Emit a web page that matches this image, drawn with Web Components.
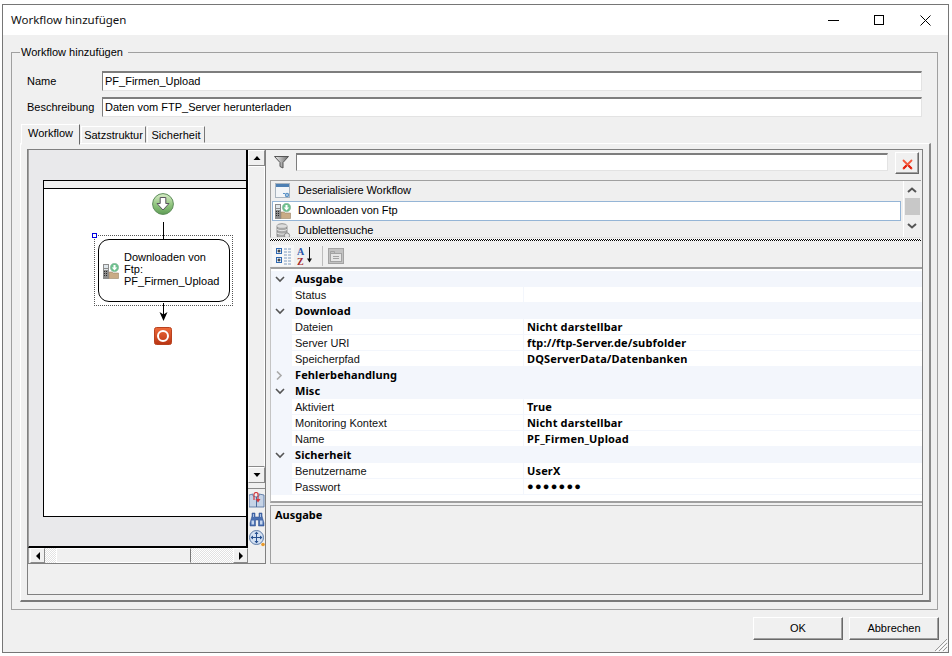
<!DOCTYPE html>
<html lang="de">
<head>
<meta charset="utf-8">
<title>Workflow hinzufügen</title>
<style>
  html, body { margin: 0; padding: 0; background: #fff; }
  body { font: 11px "Liberation Sans", Arial, sans-serif; color: #000; }
</style>
</head>
<body>
<wf-dialog heading="Workflow hinzufügen">
  <wf-group legend="Workflow hinzufügen">
    <wf-field label="Name" value="PF_Firmen_Upload"></wf-field>
    <wf-field label="Beschreibung" value="Daten vom FTP_Server herunterladen"></wf-field>
    <wf-tabs>
      <wf-designer slot="left">
        <wf-node>Downloaden von Ftp: PF_Firmen_Upload</wf-node>
      </wf-designer>
      <wf-filter slot="right"></wf-filter>
      <wf-list slot="right">
        <wf-list-item icon="window">Deserialisiere Workflow</wf-list-item>
        <wf-list-item icon="download" selected>Downloaden von Ftp</wf-list-item>
        <wf-list-item icon="database">Dublettensuche</wf-list-item>
      </wf-list>
      <wf-splitter slot="right"></wf-splitter>
      <wf-grid-toolbar slot="right"></wf-grid-toolbar>
      <wf-propgrid slot="right">
        <wf-prop-group label="Ausgabe">
          <wf-prop name="Status"></wf-prop>
        </wf-prop-group>
        <wf-prop-group label="Download">
          <wf-prop name="Dateien" value="Nicht darstellbar"></wf-prop>
          <wf-prop name="Server URI" value="ftp://ftp-Server.de/subfolder"></wf-prop>
          <wf-prop name="Speicherpfad" value="DQServerData/Datenbanken"></wf-prop>
        </wf-prop-group>
        <wf-prop-group label="Fehlerbehandlung" collapsed></wf-prop-group>
        <wf-prop-group label="Misc">
          <wf-prop name="Aktiviert" value="True"></wf-prop>
          <wf-prop name="Monitoring Kontext" value="Nicht darstellbar"></wf-prop>
          <wf-prop name="Name" value="PF_Firmen_Upload"></wf-prop>
        </wf-prop-group>
        <wf-prop-group label="Sicherheit">
          <wf-prop name="Benutzername" value="UserX"></wf-prop>
          <wf-prop name="Passwort" value="●●●●●●●" secret></wf-prop>
        </wf-prop-group>
      </wf-propgrid>
      <wf-description slot="right">Ausgabe</wf-description>
    </wf-tabs>
  </wf-group>
</wf-dialog>

<script>
const BOLD = '700 11px "Noto Sans", "Liberation Sans", sans-serif';

const ICONS = {
  start: `<svg width="22" height="22" viewBox="0 0 22 22"><defs><linearGradient id="g" x1="0" y1="0" x2="0" y2="1"><stop offset="0" stop-color="#d9edc9"/><stop offset=".55" stop-color="#8fc47d"/><stop offset="1" stop-color="#5f9d56"/></linearGradient></defs><circle cx="11" cy="11" r="10.4" fill="url(#g)" stroke="#5c8c58" stroke-width="1"/><path d="M8.2 4.500h5.600v6h3.200L11 17 5 10.500h3.200z" fill="#fff" stroke="#5b5560" stroke-width="1"/></svg>`,
  stop: `<svg width="18" height="18" viewBox="0 0 18 18"><defs><linearGradient id="g" x1="0" y1="0" x2="0" y2="1"><stop offset="0" stop-color="#ee6a3a"/><stop offset="1" stop-color="#b93413"/></linearGradient></defs><rect x=".5" y=".5" width="17" height="17" rx="2" fill="url(#g)" stroke="#b8421f"/><circle cx="9" cy="9" r="5" fill="none" stroke="#fff" stroke-width="2"/></svg>`,
  download: `<svg width="16" height="16" viewBox="0 0 16 16"><rect x="0" y="1" width="6" height="15" fill="#8c8c8c"/><rect x="1" y="2" width="4" height="3" fill="#dfe6ea"/><rect x="1" y="6" width="4" height="1" fill="#dfe6ea"/><rect x="1" y="8" width="1" height="1" fill="#2b2b2b"/><rect x="3" y="8" width="1" height="1" fill="#2b2b2b"/><rect x="1" y="10" width="1" height="1" fill="#2b2b2b"/><rect x="3" y="10" width="1" height="1" fill="#2b2b2b"/><rect x="1" y="12" width="1" height="1" fill="#2b2b2b"/><rect x="3" y="12" width="1" height="1" fill="#2b2b2b"/><path d="M6 9h3l1 1h5.500v5.500H6z" fill="#c9ab86" stroke="#9a8468" stroke-width=".6"/><circle cx="11.500" cy="4.500" r="4.200" fill="#6cc08d" stroke="#8fb8a0" stroke-width=".6"/><path d="M10.500 2h2v2.500h1.800L11.500 7.500 8.700 4.500h1.800z" fill="#fff"/></svg>`,
  window: `<svg width="16" height="16" viewBox="0 0 16 16"><rect x=".5" y=".5" width="14" height="14" fill="#f2f5f8" stroke="#a9b4bf"/><rect x="1" y="1" width="13" height="3" fill="#4d7fb3"/><circle cx="12" cy="12" r="2.200" fill="#5b93c7"/><circle cx="12" cy="12" r=".8" fill="#fff"/><rect x="8" y="10" width="2" height="1" fill="#5b93c7"/></svg>`,
  database: `<svg width="16" height="16" viewBox="0 0 16 16"><path d="M2 3c0-3 10-3 10 0v10c0 3-10 3-10 0z" fill="#a8a8a8" stroke="#6f6f6f" stroke-width=".7"/><ellipse cx="7" cy="3" rx="5" ry="1.800" fill="#dcdcdc"/><path d="M2 6.500c2 1.600 8 1.600 10 0M2 10c2 1.600 8 1.600 10 0" fill="none" stroke="#e6e6e6"/><circle cx="12" cy="12.500" r="2.600" fill="#e4e4e4" stroke="#777" stroke-width=".8"/></svg>`,
  funnel: `<svg width="15" height="13" viewBox="0 0 15 13"><defs><linearGradient id="g" x1="0" y1="0" x2="1" y2="0"><stop offset="0" stop-color="#f2f2f2"/><stop offset="1" stop-color="#6a6a6a"/></linearGradient></defs><path d="M.5.500h14L9 6.500V12L6 10.500v-4z" fill="url(#g)" stroke="#555" stroke-width="1"/></svg>`,
  cross: `<svg width="11" height="11" viewBox="0 0 11 11"><path d="M1.500 1.500l8 8M9.500 1.500l-8 8" stroke="#f4563a" stroke-width="1.800" stroke-linecap="round"/><path d="M6.500 6.500l3 3M4.500 6.500l-3 3" stroke="#e0200f" stroke-width="2"/></svg>`,
  categories: `<svg width="17" height="18" viewBox="0 0 17 18"><g fill="#e8f0fa" stroke="#2f68b0"><rect x="1.500" y="1.500" width="5" height="5"/><rect x="1.500" y="10.500" width="5" height="5"/></g><path d="M2.500 4h3M4 2.500v3M2.500 13h3M4 11.500v3" stroke="#111"/><path d="M9 2h7M9 5h7M9 8h7M9 11h7M9 14h7M9 17h7" stroke="#7f9cc0" stroke-dasharray="3 1"/></svg>`,
  sort: `<svg width="18" height="19" viewBox="0 0 18 19"><text x="0" y="8.500" font-family="Liberation Serif" font-weight="700" font-size="10" fill="#2a55a8">A</text><text x="0" y="18.500" font-family="Liberation Serif" font-weight="700" font-size="10" fill="#a5282c">Z</text><path d="M12.500 1v14" stroke="#111"/><path d="M10 12.500l2.500 4 2.500-4z" fill="#111"/></svg>`,
  pages: `<svg width="16" height="16" viewBox="0 0 16 16"><rect x=".5" y=".5" width="15" height="15" fill="#c2c2c2" stroke="#a3a3a3"/><rect x="2.500" y="5.500" width="11" height="8" fill="#e6e6e6" stroke="#a3a3a3"/><path d="M2.500 5.500v-2h4v2M5 8.500h6M5 10.500h6" fill="none" stroke="#a3a3a3"/></svg>`,
  book: `<svg width="16" height="16" viewBox="0 0 16 16"><path d="M0 3l4-1v2l3 1 3-1V2l5 1v12H0z" fill="#c5d3e6" stroke="#4c6c9c" stroke-width=".8"/><path d="M7.500 5v10" stroke="#4c6c9c"/><path d="M5 8V2.500a2 2 0 0 1 4 0M9 1v7" fill="none" stroke="#d23a3f" stroke-width="1.200"/><path d="M6.500 7h5L9 10.500z" fill="#d23a3f"/></svg>`,
  binoculars: `<svg width="16" height="16" viewBox="0 0 16 16"><path d="M3 2h3v4h4V2h3v3l2 7v3H9.500V9h-3v6H1v-3l2-7z" fill="#4a6fb0" stroke="#2b4a88" stroke-width=".5"/><path d="M2.500 9.500h2.500v4H2.500zM11 9.500h2.500v4H11z" fill="#c4d5ee"/><path d="M4 3h1v3H4zM11 3h1v3h-1z" fill="#a9c0e2"/></svg>`,
  pan: `<svg width="16" height="17" viewBox="0 0 16 17"><circle cx="7.500" cy="7.500" r="7" fill="#d4e1f2" stroke="#5c7ba8"/><path d="M7.500 2.500v10M2.500 7.500h10" stroke="#27508f"/><path d="M7.500 1.500l2 2.500h-4zM7.500 13.500l2-2.500h-4zM1.500 7.500L4 5.500v4zM13.500 7.500L11 5.500v4z" fill="#27508f"/><circle cx="14" cy="14.500" r="1.800" fill="#e89a2c"/></svg>`,
  grip: `<svg width="14" height="14" viewBox="0 0 14 14"><path d="M13 1L1 13M13 5L5 13M13 9L9 13" stroke="#9a9a9a" fill="none"/><path d="M14 2L2 14M14 6L6 14M14 10L10 14" stroke="#fff" fill="none"/></svg>`
};

class WfIcon extends HTMLElement {
  connectedCallback() {
    if (this.shadowRoot) return;
    this.attachShadow({ mode: "open" });
    this.shadowRoot.innerHTML = `<style>:host{display:block;line-height:0}</style>${ICONS[this.getAttribute("name")] || ""}`;
  }
}
customElements.define("wf-icon", WfIcon);

class WfArrow extends HTMLElement {
  // little raised scrollbar button with a black triangle
  connectedCallback() {
    if (this.shadowRoot) return;
    this.attachShadow({ mode: "open" });
    const paths = { up: "M.5 6L4 2 7.500 6z", down: "M.5 2L4 6 7.500 2z", left: "M6 0L2 4 6 8z", right: "M2 0L6 4 2 8z" };
    this.shadowRoot.innerHTML = `
      <style>
        :host { display: flex; align-items: center; justify-content: center; box-sizing: border-box;
                background: #f0f0f0; border: 1px solid; border-color: #fff #8a8a8a #8a8a8a #fff; }
      </style>
      <svg width="8" height="8" viewBox="0 0 8 8"><path d="${paths[this.getAttribute("dir")]}" fill="#000"/></svg>`;
  }
}
customElements.define("wf-arrow", WfArrow);

class WfDialog extends HTMLElement {
  constructor() {
    super();
    this.attachShadow({ mode: "open" });
    this.shadowRoot.innerHTML = `
      <style>
        :host { display: flex; flex-direction: column; box-sizing: border-box; width: 947px; height: 649px;
                margin: 4px 0 0 2px; border: 1px solid #767676; position: relative; background: #f0f0f0; }
        header { display: flex; align-items: center; height: 30px; padding-left: 8px; background: #fff; flex: none; }
        h1 { flex: 1; margin: 0 0 2px; font: 400 11.5px "Noto Sans", "Liberation Sans", sans-serif; color: #111; }
        .ctl { width: 46px; height: 30px; display: flex; align-items: center; justify-content: center; }
        main { flex: 1; display: flex; flex-direction: column; padding: 17px 0 0 8px; }
        footer { display: flex; justify-content: flex-end; gap: 6px; margin-top: 7px; padding-right: 9px; }
        .grip { position: absolute; right: 0; bottom: 0; }
      </style>
      <header>
        <h1></h1>
        <div class="ctl"><svg width="11" height="11"><path d="M0 5.500h11" stroke="#000"/></svg></div>
        <div class="ctl"><svg width="11" height="11"><rect x=".5" y=".5" width="9" height="9" fill="none" stroke="#000"/></svg></div>
        <div class="ctl"><svg width="11" height="11"><path d="M.5.500l10 10M10.500.500l-10 10" stroke="#000"/></svg></div>
      </header>
      <main>
        <slot></slot>
        <footer>
          <wf-button>OK</wf-button>
          <wf-button>Abbrechen</wf-button>
        </footer>
      </main>
      <wf-icon class="grip" name="grip"></wf-icon>`;
    this.shadowRoot.querySelector("h1").textContent = this.getAttribute("heading");
  }
}
customElements.define("wf-dialog", WfDialog);

class WfButton extends HTMLElement {
  constructor() {
    super();
    this.attachShadow({ mode: "open" });
    this.shadowRoot.innerHTML = `
      <style>
        :host { display: flex; align-items: center; justify-content: center; box-sizing: border-box;
                width: 90px; height: 23px; padding-bottom: 2px; background: #f0f0f0; font-size: 11px;
                border: 1px solid; border-color: #fff #696969 #696969 #fff;
                box-shadow: inset -1px -1px 0 #a0a0a0; }
      </style>
      <slot></slot>`;
  }
}
customElements.define("wf-button", WfButton);

class WfGroup extends HTMLElement {
  constructor() {
    super();
    this.attachShadow({ mode: "open" });
    this.shadowRoot.innerHTML = `
      <style>
        :host { display: flex; flex-direction: column; box-sizing: border-box; width: 927px; height: 558px;
                border: 1px solid #a0a0a0; padding: 0 6px 7px 8px; }
        .legend { align-self: flex-start; margin: -7px 0 12px 0; padding: 0 5px 0 1px; height: 13px; line-height: 13px;
                  background: #f0f0f0; font-size: 11px; }
        .body { flex: 1; display: flex; flex-direction: column; min-height: 0; }
      </style>
      <div class="legend"></div>
      <div class="body"><slot></slot></div>`;
    this.shadowRoot.querySelector(".legend").textContent = this.getAttribute("legend");
  }
}
customElements.define("wf-group", WfGroup);

class WfField extends HTMLElement {
  constructor() {
    super();
    this.attachShadow({ mode: "open" });
    this.shadowRoot.innerHTML = `
      <style>
        :host { display: flex; align-items: center; height: 19px; margin: 0 9px 7px 7px; font-size: 11px; }
        label { width: 75px; flex: none; }
        .input { flex: 1; box-sizing: border-box; height: 20px; line-height: 17px; padding-left: 2px; background: #fff;
                 border: 1px solid #e3e3e3; border-top: 2px solid #7d7d7d; border-left: 1px solid #7d7d7d; }
      </style>
      <label></label><div class="input"></div>`;
    this.shadowRoot.querySelector("label").textContent = this.getAttribute("label");
    this.shadowRoot.querySelector(".input").textContent = this.getAttribute("value");
  }
}
customElements.define("wf-field", WfField);

class WfTabs extends HTMLElement {
  constructor() {
    super();
    this.attachShadow({ mode: "open" });
    this.shadowRoot.innerHTML = `
      <style>
        :host { display: flex; flex-direction: column; flex: 1; min-height: 0; margin-top: 1px; }
        .strip { display: flex; align-items: flex-end; height: 19px; padding-left: 1px; gap: 1px; position: relative; z-index: 1; flex: none; }
        .tab { box-sizing: border-box; height: 17px; display: flex; align-items: center; justify-content: center; background: #f0f0f0;
               border: 1px solid; border-color: #fff #777 transparent #fff; font-size: 11px; }
        .tab.on { height: 21px; margin-bottom: -2px; padding-bottom: 3px; border-right-color: #696969; }
        .page { flex: 1; min-height: 0; box-sizing: border-box; padding: 5px 6px 5px 6px;
                border-top: 1px solid #fff; border-left: 1px solid #fff; border-right: 2px solid #8a8a8a; border-bottom: 2px solid #7a7a7a; }
        .inner { height: 100%; box-sizing: border-box; border: 1px solid #808080; display: flex; align-items: flex-start; }
        .left { flex: none; width: 238px; }
        .right { flex: 1; display: flex; flex-direction: column; box-sizing: border-box; height: 414px; padding-left: 4px; min-width: 0; }
      </style>
      <div class="strip">
        <div class="tab on" style="width:59px">Workflow</div>
        <div class="tab" style="width:65px">Satzstruktur</div>
        <div class="tab" style="width:58px">Sicherheit</div>
      </div>
      <div class="page">
        <div class="inner">
          <div class="left"><slot name="left"></slot></div>
          <div class="right"><slot name="right"></slot></div>
        </div>
      </div>`;
  }
}
customElements.define("wf-tabs", WfTabs);

class WfDesigner extends HTMLElement {
  constructor() {
    super();
    this.attachShadow({ mode: "open" });
    this.shadowRoot.innerHTML = `
      <style>
        :host { display: grid; grid-template-columns: 220px 17px; grid-template-rows: 398px 15px; box-sizing: border-box;
                width: 238px; height: 414px; border-right: 1px solid #808080; border-bottom: 1px solid #808080; }
        .view { box-sizing: border-box; background: #e9e9eb; border-left: 1px solid #a0a0a0;
                border-right: 2px solid #000; border-bottom: 2px solid #000; padding: 30px 0 0 14px; }
        .canvas { position: relative; box-sizing: border-box; height: 337px; background: #fff;
                  border: 1px solid #000; border-right: 0; }
        .band { height: 7px; background: #f0f0f0; border-bottom: 1px solid #000; }
        .start { position: absolute; left: 108px; top: 12px; }
        .wire { position: absolute; left: 119px; top: 41px; width: 1px; height: 17px; background: #000; }
        .sel { position: absolute; left: 50px; top: 54px; width: 139px; height: 71px; box-sizing: border-box;
               border: 1px dotted #555; }
        .handle { position: absolute; left: 48px; top: 52px; width: 5px; height: 5px; box-sizing: border-box;
                  border: 1px solid #0000e0; background: #fff; }
        .place { position: absolute; left: 54px; top: 58px; }
        .arrow { position: absolute; left: 115px; top: 122px; }
        .stop { position: absolute; left: 110px; top: 146px; }
        .vbar { display: flex; flex-direction: column; background: #f0f0f0; }
        .vbar wf-arrow { height: 16px; flex: none; }
        .thumb { flex: none; height: 301px; box-sizing: border-box; background: #f0f0f0; border: 1px solid;
                 border-color: #fff #fff #8a8a8a #fff; }
        .tools { display: flex; flex-direction: column; align-items: center; gap: 3px; margin-top: 5px;
                 padding-top: 3px; border-top: 1px solid #8a8a8a; }
        .hbar { display: flex; background: #f0f0f0; border-left: 1px solid #a0a0a0; padding-left: 1px; }
        .hbar wf-arrow { width: 15px; flex: none; }
        .track { background: repeating-conic-gradient(#fff 0 25%, #e2e2e2 0 50%) 0 0 / 2px 2px; }
        .hthumb { flex: none; width: 135px; box-sizing: border-box; background: #f0f0f0; border: 1px solid;
                  border-color: #fff #777 #fff #fff; }
        .corner { background: #f0f0f0; }
      </style>
      <div class="view">
        <div class="canvas">
          <div class="band"></div>
          <wf-icon class="start" name="start"></wf-icon>
          <div class="wire"></div>
          <div class="sel"></div>
          <div class="handle"></div>
          <div class="place"><slot></slot></div>
          <svg class="arrow" width="9" height="19"><path d="M4.500 0v13" stroke="#000"/><path d="M.5 9l4 2.500 4-2.500-4 9z" fill="#000"/></svg>
          <wf-icon class="stop" name="stop"></wf-icon>
        </div>
      </div>
      <div class="vbar">
        <wf-arrow dir="up"></wf-arrow>
        <div class="thumb"></div>
        <wf-arrow dir="down"></wf-arrow>
        <div class="tools">
          <wf-icon name="book"></wf-icon>
          <wf-icon name="binoculars"></wf-icon>
          <wf-icon name="pan"></wf-icon>
        </div>
      </div>
      <div class="hbar">
        <wf-arrow dir="left"></wf-arrow>
        <div class="track" style="width:11px"></div>
        <div class="hthumb"></div>
        <div class="track" style="flex:1"></div>
        <wf-arrow dir="right"></wf-arrow>
      </div>
      <div class="corner"></div>`;
  }
}
customElements.define("wf-designer", WfDesigner);

class WfNode extends HTMLElement {
  constructor() {
    super();
    this.attachShadow({ mode: "open" });
    this.shadowRoot.innerHTML = `
      <style>
        :host { display: flex; align-items: center; gap: 5px; box-sizing: border-box; width: 132px; height: 63px;
                padding-left: 4px; background: #fff; border: 1px solid #000; border-radius: 11px; }
        .txt { width: 100px; line-height: 12px; margin-top: -3px; }
      </style>
      <wf-icon name="download"></wf-icon>
      <div class="txt"><slot></slot></div>`;
  }
}
customElements.define("wf-node", WfNode);

class WfFilter extends HTMLElement {
  constructor() {
    super();
    this.attachShadow({ mode: "open" });
    this.shadowRoot.innerHTML = `
      <style>
        :host { display: flex; align-items: flex-start; height: 30px; flex: none; }
        wf-icon { margin: 6px 0 0 4px; }
        .box { flex: none; width: 592px; height: 18px; margin: 3px 0 0 7px; box-sizing: border-box; background: #fff;
               border: 1px solid #e3e3e3; border-top: 2px solid #7d7d7d; border-left: 1px solid #7d7d7d; }
        .clear { box-sizing: border-box; width: 24px; height: 22px; margin: 2px 0 0 7px; display: flex; align-items: center; justify-content: center;
                 background: #f0f0f0; border: 1px solid; border-color: #fff #696969 #696969 #fff; box-shadow: inset -1px -1px 0 #a0a0a0; }
      </style>
      <wf-icon name="funnel"></wf-icon>
      <div class="box"></div>
      <div class="clear"><wf-icon name="cross" style="margin:2px 0 0 0"></wf-icon></div>`;
  }
}
customElements.define("wf-filter", WfFilter);

class WfList extends HTMLElement {
  constructor() {
    super();
    this.attachShadow({ mode: "open" });
    this.shadowRoot.innerHTML = `
      <style>
        :host { display: flex; flex: none; box-sizing: border-box; height: 58px; margin-right: 1px; overflow: hidden;
                background: #efefef; border-top: 1px solid #a0a0a0; border-left: 1px solid #a0a0a0; border-bottom: 1px solid #e3e3e3; }
        .items { flex: 1; min-width: 0; padding: 0 1px; }
        .bar { flex: none; width: 17px; box-sizing: border-box; border-left: 1px solid #fff; display: flex; flex-direction: column;
               align-items: center; margin-right: 1px; }
        .bar svg { flex: none; }
        .up { margin-top: 6px; }
        .t { width: 15px; height: 17px; background: #c8c8c8; margin: 5px 0 8px; flex: none; }
      </style>
      <div class="items"><slot></slot></div>
      <div class="bar">
        <svg class="up" width="10" height="6"><path d="M1 5l4-3.500L9 5" fill="none" stroke="#555" stroke-width="2"/></svg>
        <div class="t"></div>
        <svg width="10" height="6"><path d="M1 1l4 3.500L9 1" fill="none" stroke="#555" stroke-width="2"/></svg>
      </div>`;
  }
}
customElements.define("wf-list", WfList);

class WfListItem extends HTMLElement {
  constructor() {
    super();
    this.attachShadow({ mode: "open" });
    this.shadowRoot.innerHTML = `
      <style>
        :host { display: flex; align-items: center; gap: 7px; box-sizing: border-box; height: 20px; padding-left: 2px;
                border: 1px solid transparent; margin-right: 1px; letter-spacing: -.08px; }
        :host([selected]) { background: #fff; border-color: #95b5d6; }
        .t { margin-top: -2px; }
      </style>
      <wf-icon name="${this.getAttribute("icon")}"></wf-icon><div class="t"><slot></slot></div>`;
  }
}
customElements.define("wf-list-item", WfListItem);

class WfSplitter extends HTMLElement {
  constructor() {
    super();
    this.attachShadow({ mode: "open" });
    this.shadowRoot.innerHTML = `
      <style>
        :host { display: block; flex: none; height: 2px; margin: 1px 1px 0 0;
                background: repeating-conic-gradient(#000 0 25%, #fff 0 50%) 0 0 / 2px 2px; }
      </style>`;
  }
}
customElements.define("wf-splitter", WfSplitter);

class WfGridToolbar extends HTMLElement {
  constructor() {
    super();
    this.attachShadow({ mode: "open" });
    this.shadowRoot.innerHTML = `
      <style>
        :host { display: flex; align-items: center; flex: none; box-sizing: border-box; height: 26px; padding: 3px 0 0 2px; }
        .on { box-sizing: border-box; width: 22px; height: 21px; display: flex; align-items: center; justify-content: center; background: #f7f7f7; }
        .sort { margin-left: 3px; }
        .sep { width: 1px; height: 20px; background: #bdbdbd; margin: 0 5px 0 7px; }
      </style>
      <div class="on"><wf-icon name="categories"></wf-icon></div>
      <wf-icon class="sort" name="sort"></wf-icon>
      <div class="sep"></div>
      <wf-icon name="pages"></wf-icon>`;
  }
}
customElements.define("wf-grid-toolbar", WfGridToolbar);

class WfPropgrid extends HTMLElement {
  constructor() {
    super();
    this.attachShadow({ mode: "open" });
    this.shadowRoot.innerHTML = `
      <style>
        :host { display: block; flex: none; box-sizing: border-box; height: 236px; padding-top: 2px; background: #fff;
                border-top: 2px solid #a0a0a0; border-bottom: 2px solid #a0a0a0; border-left: 1px solid #c4c4c4; }
      </style>
      <slot></slot>`;
  }
}
customElements.define("wf-propgrid", WfPropgrid);

class WfPropGroup extends HTMLElement {
  constructor() {
    super();
    this.attachShadow({ mode: "open" });
    const open = !this.hasAttribute("collapsed");
    this.shadowRoot.innerHTML = `
      <style>
        :host { display: block; }
        .head { display: flex; align-items: center; height: 16px; background: #f3f6fc; font: ${BOLD}; letter-spacing: .1px; }
        .chev { width: 24px; flex: none; display: flex; padding-left: 4px; box-sizing: border-box; }
        span { margin-top: -2px; }
      </style>
      <div class="head">
        <div class="chev">
          ${open
            ? `<svg width="10" height="7"><path d="M1 1l4 4 4-4" fill="none" stroke="#555" stroke-width="1.600"/></svg>`
            : `<svg width="10" height="9"><path d="M2 .5l4 4-4 4" fill="none" stroke="#aaa" stroke-width="1.600"/></svg>`}
        </div>
        <span></span>
      </div>
      <slot></slot>`;
    this.shadowRoot.querySelector("span").textContent = this.getAttribute("label");
  }
}
customElements.define("wf-prop-group", WfPropGroup);

class WfProp extends HTMLElement {
  constructor() {
    super();
    this.attachShadow({ mode: "open" });
    this.shadowRoot.innerHTML = `
      <style>
        :host { display: flex; box-sizing: border-box; height: 16px; padding-left: 21px; background: #f3f6fc; }
        .n, .v { background: #fff; height: 15px; padding-left: 3px; box-sizing: border-box; }
        .n { width: 231px; flex: none; margin-right: 1px; color: #111; line-height: 16px; }
        .v { flex: 1; font: ${BOLD}; line-height: 15px; letter-spacing: .15px; }
        :host([secret]) .v { font: 11px/15px "Liberation Sans", sans-serif; letter-spacing: 1.25px; }
      </style>
      <div class="n"></div><div class="v"></div>`;
    this.shadowRoot.querySelector(".n").textContent = this.getAttribute("name");
    this.shadowRoot.querySelector(".v").textContent = this.getAttribute("value") || "";
  }
}
customElements.define("wf-prop", WfProp);

class WfDescription extends HTMLElement {
  constructor() {
    super();
    this.attachShadow({ mode: "open" });
    this.shadowRoot.innerHTML = `
      <style>
        :host { display: block; flex: none; box-sizing: border-box; height: 59px; margin-top: 2px; padding: 2px 0 0 4px;
                border-top: 1px solid #a0a0a0; border-left: 1px solid #a0a0a0; border-bottom: 1px solid #a0a0a0; font: ${BOLD}; line-height: 13px; }
      </style>
      <slot></slot>`;
  }
}
customElements.define("wf-description", WfDescription);
</script>
</body>
</html>
